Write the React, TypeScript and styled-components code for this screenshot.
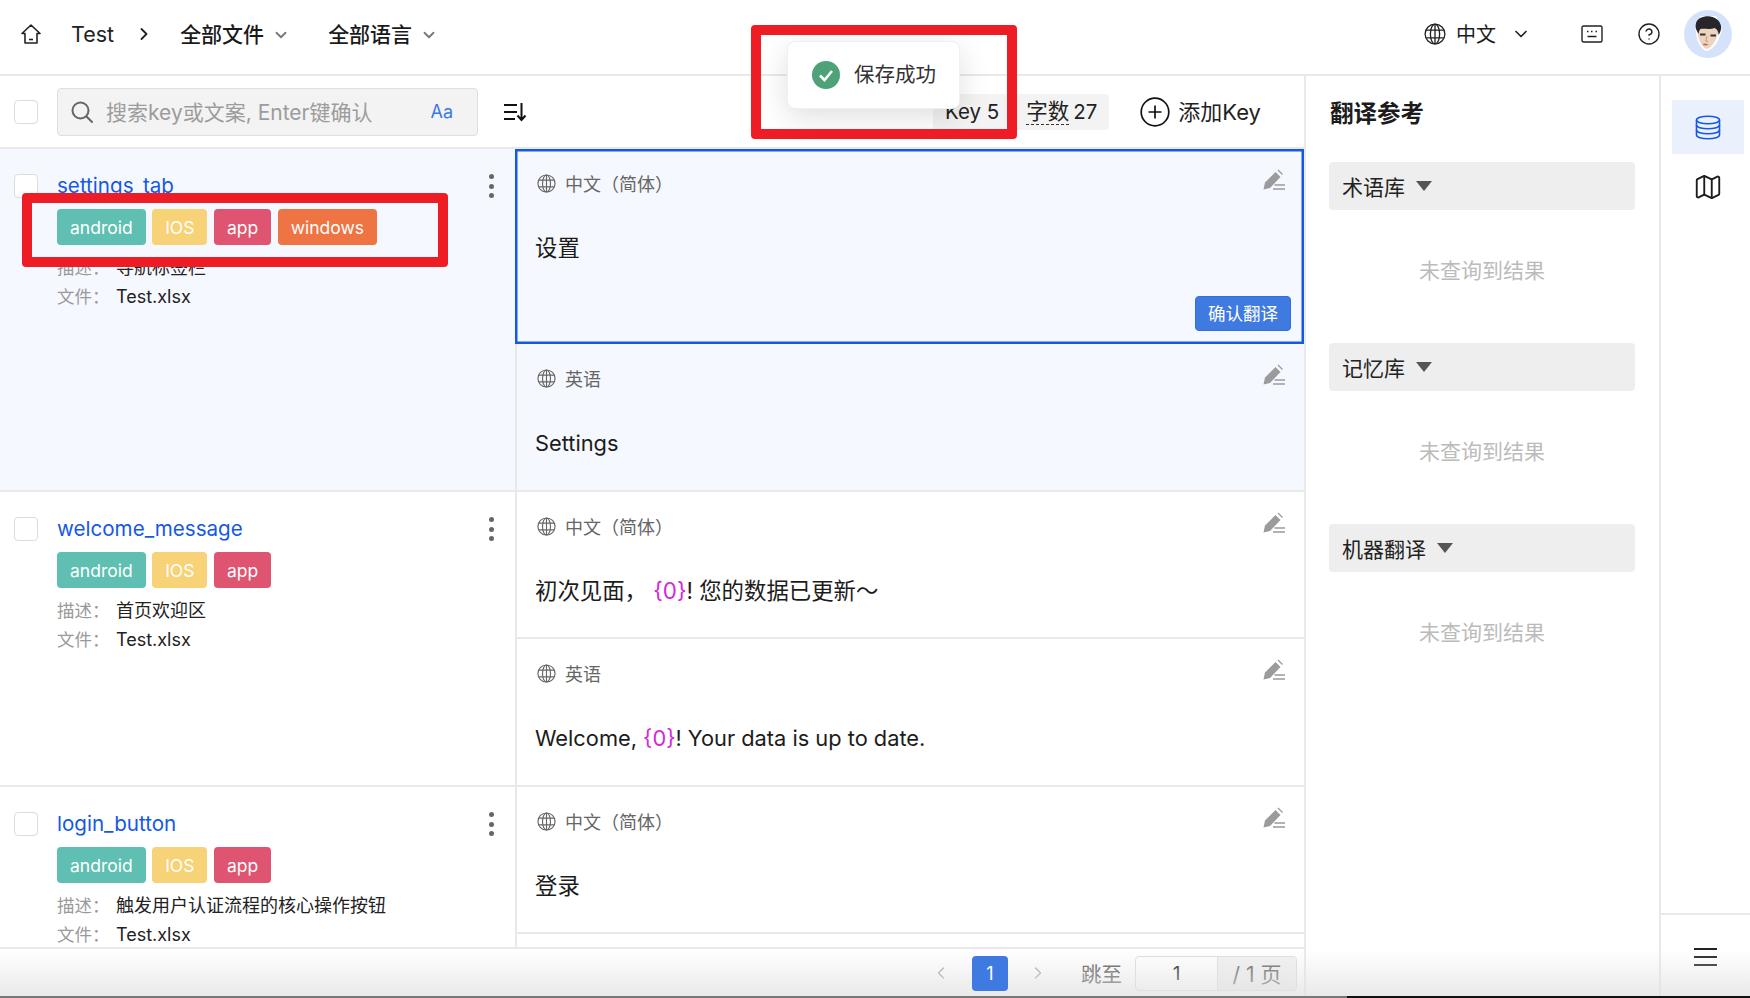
import React from "react";
import styled, { createGlobalStyle } from "styled-components";
import { ChevronDown, ChevronRight, ChevronLeft, CircleHelp, Map as MapIcon } from "lucide-react";

const GlobalStyle = createGlobalStyle`
  html, body { margin: 0; padding: 0; background: #fff; }
  body {
    font-family: Inter, "Noto Sans CJK SC", sans-serif;
    color: #1c1c1c;
  }
  * { box-sizing: border-box; }
`;

const Page = styled.div`
  position: relative;
  width: 1750px;
  height: 998px;
  overflow: hidden;
  display: flex;
  flex-direction: column;
`;

const Header = styled.header`
  height: 76px;
  flex: none;
  display: flex;
  align-items: center;
  border-bottom: 2px solid #e9e9e9;
  padding: 0 18px 6px 21px;
`;

const Crumb = styled.span`
  font-size: 21.5px;
  margin-left: 30px;
  color: #222;
`;

const FileMenu = styled.span<{ $gap: number }>`
  display: flex;
  align-items: center;
  gap: 8px;
  margin-left: ${(p) => p.$gap}px;
  padding-bottom: 3px;
  font-size: 21px;
  font-weight: 500;
  color: #1a1a1a;
  svg { color: #777; margin-top: 4px; }
`;

const HeaderRight = styled.div`
  margin-left: auto;
  display: flex;
  align-items: center;
`;

const LangName = styled.span`
  font-size: 20px;
  margin-left: 10px;
  margin-right: 15px;
  padding-bottom: 2px;
`;

const HeaderIcon = styled.span<{ $left: number }>`
  display: flex;
  margin-left: ${(p) => p.$left}px;
`;

const Body = styled.div`
  flex: 1;
  display: flex;
  min-height: 0;
`;

const Main = styled.main`
  width: 1304px;
  flex: none;
  display: flex;
  flex-direction: column;
  min-height: 0;
`;

const Toolbar = styled.div`
  height: 73px;
  flex: none;
  display: flex;
  align-items: center;
  padding: 0 43px 0 14px;
  border-bottom: 2px solid #e9e9e9;
`;

const Checkbox = styled.span`
  width: 24px;
  height: 24px;
  flex: none;
  display: block;
  background: #fff;
  border: 1.5px solid #dcdcdc;
  border-radius: 4px;
`;

const Search = styled.div`
  width: 421px;
  height: 48px;
  margin-left: 19px;
  display: flex;
  align-items: center;
  padding: 0 24px 0 12px;
  background: #f3f3f3;
  border: 1.5px solid #dfdfdf;
  border-radius: 4px;
  svg { flex: none; }
`;

const Placeholder = styled.span`
  margin-left: 12px;
  padding-bottom: 2px;
  font-size: 21px;
  color: #9c9c9c;
  white-space: nowrap;
`;

const CaseToggle = styled.span`
  margin-left: auto;
  font-size: 18px;
  color: #3b78e7;
`;

const SortButton = styled.span`
  display: flex;
  margin-left: 25px;
`;

const Stats = styled.div`
  margin-left: auto;
  display: flex;
  gap: 3px;
`;

const Stat = styled.span`
  height: 36px;
  padding: 0 12px;
  display: flex;
  align-items: center;
  gap: 4px;
  background: #f3f3f3;
  border-radius: 4px;
  font-size: 20.5px;
  color: #222;
`;

const Dashed = styled.span`
  border-bottom: 1.5px dashed #333;
  line-height: 25px;
  font-size: 21.5px;
`;

const AddKey = styled.span`
  margin-left: 31px;
  display: flex;
  align-items: center;
  gap: 8px;
  font-size: 22px;
  color: #222;
`;

const AddKeyLabel = styled.span`
  padding-bottom: 3px;
`;

const List = styled.div`
  flex: 1;
  min-height: 0;
  overflow: hidden;
`;

const Row = styled.div<{ $active?: boolean }>`
  display: flex;
  border-bottom: 2px solid #e9e9e9;
  background: ${(p) => (p.$active ? "#f5f8fe" : "#fff")};
`;

const KeyCell = styled.div`
  position: relative;
  width: 517px;
  flex: none;
  padding: 25px 20px 0 14px;
  border-right: 2px solid #e9e9e9;
  display: grid;
  grid-template-columns: 24px 1fr;
  column-gap: 19px;
  align-content: start;
`;

const KeyInfo = styled.div`
  min-width: 0;
`;

const KeyName = styled.div`
  font-size: 20.6px;
  line-height: 24px;
  color: #1558e5;
`;

const Tags = styled.div`
  display: flex;
  gap: 6.5px;
  margin-top: 11px;
`;

const tagColors: Record<string, string> = {
  android: "#5fbfb2",
  IOS: "#f8d276",
  app: "#df5470",
  windows: "#ee7443",
};

const Tag = styled.span<{ $name: string }>`
  height: 36px;
  padding: 0 13px;
  display: flex;
  align-items: center;
  background: ${(p) => tagColors[p.$name]};
  border-radius: 4px;
  color: #fff;
  font-size: 17.5px;
`;

const MetaList = styled.div`
  margin-top: 8px;
`;

const Meta = styled.div`
  display: flex;
  line-height: 24px;
  height: 29.5px;
  align-items: center;
`;

const MetaLabel = styled.span`
  width: 59px;
  flex: none;
  font-size: 17.5px;
  color: #9a9a9a;
`;

const MetaValue = styled.span`
  font-size: 18px;
  color: #222;
  white-space: nowrap;
`;

const MoreDots = styled.span`
  position: absolute;
  right: 21px;
  top: 25px;
  display: flex;
  flex-direction: column;
  gap: 4.5px;
  i {
    display: block;
    width: 5px;
    height: 5px;
    border-radius: 50%;
    background: #666;
  }
`;

const Cells = styled.div`
  flex: 1;
  min-width: 0;
`;

const Cell = styled.div<{ $h: number; $selected?: boolean }>`
  position: relative;
  height: ${(p) => p.$h}px;
  padding: 22px 16px 0 18px;
  border-bottom: ${(p) => (p.$selected ? "none" : "2px solid #e9e9e9")};
  margin-left: ${(p) => (p.$selected ? "-2px" : "0")};
  padding-left: ${(p) => (p.$selected ? "20px" : "18px")};
  box-shadow: ${(p) => (p.$selected ? "inset 0 0 0 2.5px #1558e5" : "none")};
  &:last-child { border-bottom: none; }
`;

const CellHead = styled.div`
  display: flex;
  align-items: center;
  gap: 9px;
  padding-left: 2px;
  height: 24px;
  font-size: 18px;
  color: #666;
`;

const CellValue = styled.div<{ $zh: boolean }>`
  margin-top: 36px;
  font-size: ${(p) => (p.$zh ? "22.4px" : "21.8px")};
  line-height: 34px;
  color: #1c1c1c;
  white-space: pre;
`;

const Variable = styled.span`
  color: #d22ad6;
`;

const EditIcon = styled.span`
  position: absolute;
  right: 18px;
  top: 19px;
  display: flex;
`;

const ConfirmButton = styled.span`
  position: absolute;
  right: 13px;
  bottom: 13px;
  width: 96px;
  height: 35px;
  padding-bottom: 2px;
  display: flex;
  align-items: center;
  justify-content: center;
  background: #3f7ae0;
  border: 1px solid #2f6fe0;
  border-radius: 4px;
  color: #fff;
  font-size: 17.5px;
`;

const Footer = styled.footer`
  height: 51px;
  flex: none;
  display: flex;
  align-items: center;
  justify-content: flex-end;
  padding: 0 7px 1px 0;
  border-top: 2px solid #e9e9e9;
`;

const PageArrow = styled.span`
  display: flex;
  color: #a8a8a8;
`;

const PageCurrent = styled.span`
  position: relative;
  z-index: 1;
  width: 36px;
  height: 35px;
  margin: 0 20px 0 21px;
  display: flex;
  align-items: center;
  justify-content: center;
  background: #3f7ae0;
  border-radius: 4px;
  color: #fff;
  font-size: 18px;
`;

const JumpLabel = styled.span`
  margin: 0 13px 0 33px;
  font-size: 20.5px;
  color: #555;
`;

const JumpBox = styled.div`
  display: flex;
  height: 35px;
  width: 162px;
  border: 1.5px solid #dedede;
  border-radius: 4px;
  background: #fff;
  overflow: hidden;
`;

const JumpInput = styled.span`
  width: 82px;
  display: flex;
  align-items: center;
  justify-content: center;
  font-size: 19px;
  color: #222;
  border-right: 1.5px solid #dedede;
`;

const JumpTotal = styled.span`
  flex: 1;
  display: flex;
  align-items: center;
  justify-content: center;
  background: #f1f1f1;
  font-size: 21px;
  color: #666;
  white-space: pre;
`;

const RefPanel = styled.aside`
  width: 355px;
  flex: none;
  border-left: 2px solid #e9e9e9;
  padding: 24px 24px 0 23px;
`;

const RefTitle = styled.h2`
  margin: 0;
  font-size: 23.5px;
  line-height: 28px;
  font-weight: 700;
  color: #1c1c1c;
  padding-left: 1px;
`;

const RefBar = styled.div`
  height: 48px;
  display: flex;
  align-items: center;
  gap: 11px;
  padding-left: 13px;
  background: #eeeeee;
  border-radius: 4px;
  font-size: 21px;
  color: #222;
`;

const Caret = styled.span`
  width: 0;
  height: 0;
  border-left: 8px solid transparent;
  border-right: 8px solid transparent;
  border-top: 10px solid #555;
`;

const RefEmpty = styled.div`
  height: 133px;
  padding-top: 44px;
  line-height: 34px;
  text-align: center;
  font-size: 21px;
  color: #bbbbbb;
`;

const RefSections = styled.div`
  margin-top: 34px;
`;

const Rail = styled.nav`
  flex: 1;
  border-left: 2px solid #e9e9e9;
  display: flex;
  flex-direction: column;
  align-items: center;
  padding-top: 24px;
`;

const RailItem = styled.span<{ $active?: boolean }>`
  width: 72px;
  height: 54px;
  display: flex;
  align-items: center;
  justify-content: center;
  margin-left: 5px;
  margin-bottom: 6px;
  background: ${(p) => (p.$active ? "#eaf1fd" : "transparent")};
  color: ${(p) => (p.$active ? "#1558e5" : "#1c1c1c")};
`;

const RailBottom = styled.div`
  margin-top: auto;
  height: 85px;
  width: 100%;
  border-top: 2px solid #e9e9e9;
  display: flex;
  align-items: center;
  justify-content: center;
`;

const Burger = styled.span`
  width: 23px;
  display: flex;
  flex-direction: column;
  gap: 6px;
  i { display: block; height: 2px; background: #222; }
`;

const Toast = styled.div`
  position: absolute;
  left: 787px;
  top: 41px;
  width: 173px;
  height: 68px;
  display: flex;
  align-items: center;
  gap: 14px;
  padding: 0 0 0 24px;
  background: #fff;
  border: 1px solid #f0f0f0;
  border-radius: 8px;
  box-shadow: 0 8px 30px rgba(0, 0, 0, 0.13);
  font-size: 20.5px;
  color: #333;
`;

const ToastLabel = styled.span`
  padding-bottom: 4px;
`;

const Annotation = styled.div<{ $x: number; $y: number; $w: number; $h: number }>`
  position: absolute;
  left: ${(p) => p.$x}px;
  top: ${(p) => p.$y}px;
  width: ${(p) => p.$w}px;
  height: ${(p) => p.$h}px;
  border: 10px solid #ee1c25;
  border-radius: 4px;
  pointer-events: none;
`;

const BottomFade = styled.div`
  position: absolute;
  left: 0;
  right: 0;
  bottom: 0;
  height: 48px;
  background: linear-gradient(to bottom, rgba(225, 225, 225, 0), rgba(225, 225, 225, 0.75));
  pointer-events: none;
  &::after {
    content: "";
    position: absolute;
    left: 0;
    right: 0;
    bottom: 0;
    height: 2px;
    background: linear-gradient(to right, #777 0, #777 77%, #111 77%, #111 100%);
  }
`;

const Globe = ({ size = 19, color = "#666" }: { size?: number; color?: string }) => (
  <svg width={size} height={size} viewBox="0 0 20 20" fill="none" stroke={color} strokeWidth="1.2">
    <circle cx="10" cy="10" r="9" />
    <ellipse cx="10" cy="10" rx="4.2" ry="9" />
    <path d="M10 1v18M2 6.5h16M2 13.5h16" />
  </svg>
);

const Pencil = () => (
  <svg width="24" height="23" viewBox="0 0 24 22" fill="none">
    <path d="M1.5 21 L3 14 L13.5 3.5 L18.5 8.5 L8 19.5 Z" fill="#9b9b9b" />
    <path d="M16 1.5 L20.5 6" stroke="#9b9b9b" strokeWidth="1.2" />
    <path d="M12.5 16.5H23M11 20.5H23" stroke="#9b9b9b" strokeWidth="1.3" />
  </svg>
);

const Stack = () => (
  <svg width="26" height="25" viewBox="0 0 26 25" fill="none" stroke="currentColor" strokeWidth="1.6">
    <ellipse cx="13" cy="5" rx="11.5" ry="3.8" />
    <path d="M1.500 5v15c0 2.100 5.100 3.800 11.500 3.800s11.500-1.700 11.500-3.800V5" />
    <path d="M1.500 10c0 2.100 5.100 3.800 11.500 3.800s11.500-1.700 11.500-3.800" />
    <path d="M1.500 15c0 2.100 5.100 3.800 11.500 3.800s11.500-1.700 11.500-3.800" />
  </svg>
);

const Avatar = () => (
  <svg width="48" height="48" viewBox="0 0 48 48">
    <circle cx="24" cy="24" r="24" fill="#d5e3fa" />
    <path d="M11 14 C12 26 13 36 22 41 C30 40 35 30 38 20 L32 6 L17 6 Z" fill="#fff" />
    <path d="M13.500 20 C14 28 16 36 22.500 39 C28.500 37.500 32.500 30 35 20 L30 14 L17 14 Z" fill="#eed3bf" />
    <path d="M12 19 C10 12 15 7 21 6.500 C28 5 36 9 37 16 C37.500 20 36 23 34.500 25 C34.500 21 33 19 30.500 18 C25 20 20 18 16.500 19 C15 20 15 22 14.500 24 Z" fill="#26262a" />
    <path d="M16 24.500 h5.500 M26.500 25.500 h5.500" stroke="#2f3238" strokeWidth="2.200" />
    <path d="M18.500 34 C20.500 33 22.500 33.500 24.500 34.500 C22.500 36 20.500 36 18.500 34 Z" fill="#c9656a" />
    <path d="M23 26 L21.800 31 L24 31.500" stroke="#c79a80" strokeWidth="1" fill="none" />
  </svg>
);

type CellData = { lang: string; value?: React.ReactNode; height: number; selected?: boolean };
type RowData = {
  name: string;
  tags: string[];
  desc: string;
  active?: boolean;
  cells: CellData[];
};

const ZH = "中文（简体）";

const rows: RowData[] = [
  {
    name: "settings_tab",
    tags: ["android", "IOS", "app", "windows"],
    desc: "导航标签栏",
    active: true,
    cells: [
      { lang: ZH, value: "设置", height: 195, selected: true },
      { lang: "英语", value: "Settings", height: 146 },
    ],
  },
  {
    name: "welcome_message",
    tags: ["android", "IOS", "app"],
    desc: "首页欢迎区",
    cells: [
      {
        lang: ZH,
        value: (
          <>
            初次见面， <Variable>{"{0}"}</Variable>! 您的数据已更新～
          </>
        ),
        height: 147,
      },
      {
        lang: "英语",
        value: (
          <>
            Welcome, <Variable>{"{0}"}</Variable>! Your data is up to date.
          </>
        ),
        height: 146,
      },
    ],
  },
  {
    name: "login_button",
    tags: ["android", "IOS", "app"],
    desc: "触发用户认证流程的核心操作按钮",
    cells: [
      { lang: ZH, value: "登录", height: 147 },
      // scrolled under the footer, only its top edge shows
      { lang: "", height: 146 },
    ],
  },
];

const sections = ["术语库", "记忆库", "机器翻译"];

export default function App() {
  return (
    <Page>
      <GlobalStyle />
      <Header>
        <svg width="20" height="22" viewBox="0 0 20 22" fill="none" stroke="#222" strokeWidth="1.6" strokeLinejoin="round">
          <path d="M1 10.500 L10 2 L19 10.500 H16 V20 H4 V10.500 Z" />
          <path d="M8 16.500 H12" />
        </svg>
        <Crumb>Test</Crumb>
        <ChevronRight size={20} color="#222" strokeWidth={2.2} style={{ marginLeft: 20 }} />
        <FileMenu $gap={26}>
          全部文件
          <ChevronDown size={18} strokeWidth={2.4} />
        </FileMenu>
        <FileMenu $gap={38}>
          全部语言
          <ChevronDown size={18} strokeWidth={2.4} />
        </FileMenu>
        <HeaderRight>
          <Globe size={22} color="#222" />
          <LangName>中文</LangName>
          <ChevronDown size={20} color="#222" strokeWidth={2} />
          <HeaderIcon $left={50}>
            <svg width="22" height="18" viewBox="0 0 22 18" fill="none" stroke="#222" strokeWidth="1.4">
              <rect x="1" y="1" width="20" height="16" rx="1.500" />
              <path d="M6 6.500h1.500M10 6.500h1.500M14.500 6.500H16M6.500 11.500h9" />
            </svg>
          </HeaderIcon>
          <HeaderIcon $left={34}>
            <CircleHelp size={24} color="#222" strokeWidth={1.4} />
          </HeaderIcon>
          <HeaderIcon $left={23}>
            <Avatar />
          </HeaderIcon>
        </HeaderRight>
      </Header>
      <Body>
        <Main>
          <Toolbar>
            <Checkbox />
            <Search>
              <svg width="24" height="24" viewBox="0 0 24 24" fill="none" stroke="#666" strokeWidth="2" strokeLinecap="round">
                <circle cx="10.500" cy="10.500" r="8" />
                <path d="M16.500 16.500 L22 22" />
              </svg>
              <Placeholder>搜索key或文案, Enter键确认</Placeholder>
              <CaseToggle>Aa</CaseToggle>
            </Search>
            <SortButton>
              <svg width="24" height="20" viewBox="0 0 24 20" fill="none" stroke="#111" strokeWidth="2">
                <path d="M1 3h13M1 10h13M1 17h11M18.500 1v17M14.500 13.500l4 4.500 4-4.500" />
              </svg>
            </SortButton>
            <Stats>
              <Stat>Key 5</Stat>
              <Stat>
                <Dashed>字数</Dashed> 27
              </Stat>
            </Stats>
            <AddKey>
              <svg width="30" height="30" viewBox="0 0 30 30" fill="none" stroke="#111" strokeWidth="1.7">
                <circle cx="15" cy="15" r="13.800" />
                <path d="M15 8.500v13M8.500 15h13" />
              </svg>
              <AddKeyLabel>添加Key</AddKeyLabel>
            </AddKey>
          </Toolbar>
          <List>
            {rows.map((row) => (
              <Row key={row.name} $active={row.active}>
                <KeyCell>
                  <Checkbox />
                  <KeyInfo>
                    <KeyName>{row.name}</KeyName>
                    <Tags>
                      {row.tags.map((t) => (
                        <Tag key={t} $name={t}>
                          {t}
                        </Tag>
                      ))}
                    </Tags>
                    <MetaList>
                      <Meta>
                        <MetaLabel>描述：</MetaLabel>
                        <MetaValue>{row.desc}</MetaValue>
                      </Meta>
                      <Meta>
                        <MetaLabel>文件：</MetaLabel>
                        <MetaValue>Test.xlsx</MetaValue>
                      </Meta>
                    </MetaList>
                  </KeyInfo>
                  <MoreDots>
                    <i />
                    <i />
                    <i />
                  </MoreDots>
                </KeyCell>
                <Cells>
                  {row.cells.map((cell) => (
                    <Cell key={cell.lang} $h={cell.height} $selected={cell.selected}>
                      {cell.lang && (
                        <>
                          <CellHead>
                            <Globe />
                            {cell.lang}
                          </CellHead>
                          <CellValue $zh={cell.lang === ZH}>{cell.value}</CellValue>
                          <EditIcon>
                            <Pencil />
                          </EditIcon>
                        </>
                      )}
                      {cell.selected && <ConfirmButton>确认翻译</ConfirmButton>}
                    </Cell>
                  ))}
                </Cells>
              </Row>
            ))}
          </List>
          <Footer>
            <PageArrow>
              <ChevronLeft size={20} strokeWidth={1.6} />
            </PageArrow>
            <PageCurrent>1</PageCurrent>
            <PageArrow>
              <ChevronRight size={20} strokeWidth={1.6} />
            </PageArrow>
            <JumpLabel>跳至</JumpLabel>
            <JumpBox>
              <JumpInput>1</JumpInput>
              <JumpTotal>/ 1 页</JumpTotal>
            </JumpBox>
          </Footer>
        </Main>
        <RefPanel>
          <RefTitle>翻译参考</RefTitle>
          <RefSections>
            {sections.map((s) => (
              <React.Fragment key={s}>
                <RefBar>
                  {s}
                  <Caret />
                </RefBar>
                <RefEmpty>未查询到结果</RefEmpty>
              </React.Fragment>
            ))}
          </RefSections>
        </RefPanel>
        <Rail>
          <RailItem $active>
            <Stack />
          </RailItem>
          <RailItem>
            <MapIcon size={30} strokeWidth={1.5} />
          </RailItem>
          <RailBottom>
            <Burger>
              <i />
              <i />
              <i />
            </Burger>
          </RailBottom>
        </Rail>
      </Body>
      <Toast>
        <svg width="28" height="28" viewBox="0 0 28 28">
          <circle cx="14" cy="14" r="14" fill="#4da277" />
          <path d="M8 14.500 L12.500 19 L20 10" fill="none" stroke="#fff" strokeWidth="2.600" />
        </svg>
        <ToastLabel>保存成功</ToastLabel>
      </Toast>
      <Annotation $x={751} $y={25} $w={266} $h={114} />
      <Annotation $x={22} $y={193} $w={426} $h={74} />
      <BottomFade />
    </Page>
  );
}
